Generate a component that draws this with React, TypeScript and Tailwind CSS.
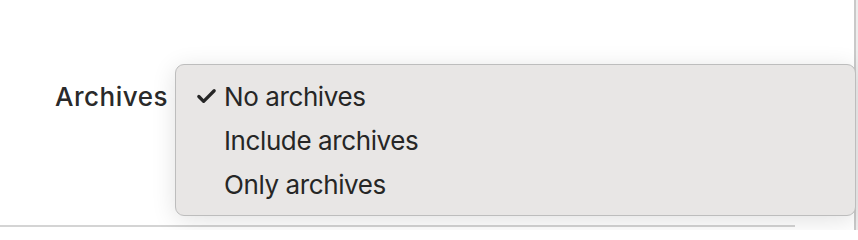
import { Check } from 'lucide-react'

const options = ['No archives', 'Include archives', 'Only archives']

export default function App() {
  const selected = 0

  return (
    <div
      className="relative w-[858px] h-[230px] overflow-hidden bg-white text-[#262626]"
      style={{ fontFamily: 'Inter, "Noto Sans", sans-serif' }}
    >
      {/* right window edge */}
      <div className="absolute top-0 right-0 h-full w-[4px] flex">
        <div className="w-[2px] bg-[#c9c9c9]" />
        <div className="w-[2px] bg-[#ededed]" />
      </div>

      {/* bottom separator */}
      <div className="absolute left-0 top-[225px] w-[795px] h-[2px] bg-[#d4d4d4]" />

      <div className="flex items-start pt-[64px]">
        <div className="w-[170px] mt-[10px] h-[44px] flex items-center justify-end pr-[2px] text-[26px] font-medium tracking-[0.5px] text-[#2a2a2a]">
          Archives
        </div>

        {/* popup menu */}
        <div className="relative z-10 ml-[5px] w-[681px] rounded-[9px] border border-[#bdbdbd] bg-[#e8e6e5] py-[9px] shadow-[0_4px_24px_rgba(0,0,0,0.12)]">
          {options.map((o, i) => (
            <div key={o} className="flex items-center h-[44px] text-[26px] tracking-[-0.4px]">
              <div className="w-[48px] flex justify-end pr-[6px]">
                {i === selected && <Check className="w-[23px] h-[23px]" strokeWidth={3.4} />}
              </div>
              <span>{o}</span>
            </div>
          ))}
        </div>
      </div>
    </div>
  )
}
